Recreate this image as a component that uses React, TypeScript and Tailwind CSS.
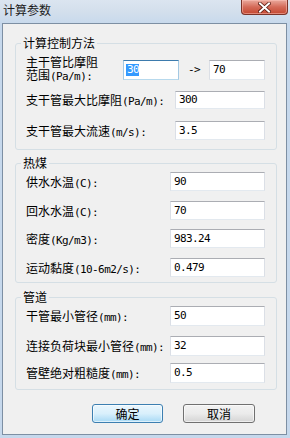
import React from "react";

const MONO = "font-['DejaVu_Sans_Mono',monospace] text-[11px] tracking-[-0.6px]";

function M({ t }: { t: string }) {
  const parts = t.split(/([\x00-\x7F]+)/).filter(Boolean);
  return (
    <>
      {parts.map((p, i) =>
        /^[\x00-\x7F]+$/.test(p) ? (
          <span key={i} className={MONO}>
            {p}
          </span>
        ) : (
          <span key={i}>{p}</span>
        )
      )}
    </>
  );
}

function Input({
  value,
  w,
  h,
  focused,
  selected,
}: {
  value: string;
  w: string;
  h: string;
  focused?: boolean;
  selected?: boolean;
}) {
  return (
    <div
      className={`${w} ${h} shrink-0 bg-white border flex items-center pl-[2px] overflow-hidden ${
        focused
          ? "border-t-[#3d7bad] border-l-[#a4c9e3] border-r-[#a4c9e3] border-b-[#b7d9ed]"
          : "border-t-[#abadb3] border-l-[#dbdfe6] border-r-[#dbdfe6] border-b-[#e3e9ef]"
      }`}
    >
      {selected ? (
        <span className={`${MONO} bg-[#3399ff] text-white leading-[12px] h-[12px] pl-[1px]`}>{value}</span>
      ) : (
        <span className={`${MONO} leading-[14px] h-[14px] pl-[1px]`}>{value}</span>
      )}
    </div>
  );
}

function Row({
  label,
  value,
  mt,
  h,
  w,
}: {
  label: string;
  value: string;
  mt: string;
  h: string;
  w: string;
}) {
  return (
    <div className={`flex items-center ${mt} ${h}`}>
      <div className="flex-1 h-[14px] leading-[14px] whitespace-nowrap">
        <M t={label} />
      </div>
      <Input value={value} w={w} h={h} />
    </div>
  );
}

function Group({
  title,
  mt,
  pb,
  children,
}: {
  title: string;
  mt: string;
  pb: string;
  children: React.ReactNode;
}) {
  return (
    <fieldset className={`${mt} ml-[12px] mr-[9px] border border-[#d5dfe5] rounded-[3px] ${pb}`}>
      <legend className="ml-[5px] px-[2px] h-[14px] leading-[14px]">
        <M t={title} />
      </legend>
      <div className="pl-[10px] pr-[11px]">{children}</div>
    </fieldset>
  );
}

export default function App() {
  return (
    <div className="w-[290px] h-[438px] flex flex-col bg-[#c6d8ec] overflow-hidden font-['Noto_Sans_CJK_SC',sans-serif] text-[12px] text-black">
      {/* title bar */}
      <div className="h-[23px] shrink-0 flex items-start bg-gradient-to-b from-[#dbe5f0] via-[#d3dfec] to-[#c8d9ec]">
        <span className="ml-[3px] mt-[3px] h-[14px] leading-[14px] text-[#1b1b1b]">计算参数</span>
        <div className="ml-auto mr-[2px] w-[47px] h-[15px] rounded-b-[4px] border border-t-0 border-[#7b3328] bg-gradient-to-b from-[#e9a99d] via-[#d46a58] to-[#c4472f] flex items-center justify-center shadow-[inset_0_0_0_1px_rgba(255,200,190,0.5)]">
          <svg width="13" height="11" viewBox="0 0 13 11">
            <path
              d="M2 1.5 L11 9.5 M11 1.5 L2 9.5"
              stroke="#5a1a10"
              strokeWidth="3.6"
              strokeLinecap="square"
            />
            <path
              d="M2 1.5 L11 9.5 M11 1.5 L2 9.5"
              stroke="#ffffff"
              strokeWidth="2"
              strokeLinecap="square"
            />
          </svg>
        </div>
      </div>

      {/* client area */}
      <div className="flex-1 ml-[2px] mr-[3px] mb-[3px] border border-[#7d8fa3] bg-[#f0f0f0] flex flex-col">
        <Group title="计算控制方法" mt="mt-[12px]" pb="pb-[9px]">
          <div className="flex items-center mt-[10px] h-[20px]">
            <div className="w-[97px] shrink-0 h-[26px] leading-[13px] mb-[4px] whitespace-nowrap">
              <div className="h-[13px]">主干管比摩阻</div>
              <div className="h-[13px]">
                <M t="范围(Pa/m):" />
              </div>
            </div>
            <Input value="30" w="w-[56px]" h="h-[20px]" focused selected />
            <div className={`w-[30px] text-center h-[14px] leading-[14px] ${MONO}`}>-&gt;</div>
            <Input value="70" w="w-[56px]" h="h-[20px]" />
          </div>
          <Row label="支干管最大比摩阻(Pa/m):" value="300" mt="mt-[11px]" h="h-[18px]" w="w-[90px]" />
          <Row label="支干管最大流速(m/s):" value="3.5" mt="mt-[12px]" h="h-[19px]" w="w-[90px]" />
        </Group>

        <Group title="热煤" mt="mt-[6px]" pb="pb-[5px]">
          <Row label="供水水温(C):" value="90" mt="mt-[2px]" h="h-[19px]" w="w-[95px]" />
          <Row label="回水水温(C):" value="70" mt="mt-[10px]" h="h-[19px]" w="w-[95px]" />
          <Row label="密度(Kg/m3):" value="983.24" mt="mt-[9px]" h="h-[19px]" w="w-[95px]" />
          <Row label="运动黏度(10-6m2/s):" value="0.479" mt="mt-[10px]" h="h-[19px]" w="w-[95px]" />
        </Group>

        <Group title="管道" mt="mt-[7px]" pb="pb-[6px]">
          <Row label="干管最小管径(mm):" value="50" mt="mt-[2px]" h="h-[20px]" w="w-[95px]" />
          <Row label="连接负荷块最小管径(mm):" value="32" mt="mt-[10px]" h="h-[20px]" w="w-[95px]" />
          <Row label="管壁绝对粗糙度(mm):" value="0.5" mt="mt-[7px]" h="h-[20px]" w="w-[95px]" />
        </Group>

        <div className="flex mt-[14px] ml-[89px] gap-[20px]">
          <button className="w-[71px] h-[19px] rounded-[3px] border border-[#3c7fb1] bg-gradient-to-b from-[#eaf6fd] via-[#d9f0fc] to-[#a7d9f5] shadow-[inset_0_0_0_1px_rgba(255,255,255,0.6)] flex items-center justify-center leading-[14px]">
            确定
          </button>
          <button className="w-[72px] h-[19px] rounded-[3px] border border-[#707070] bg-gradient-to-b from-[#f2f2f2] via-[#ebebeb] to-[#d4d4d4] shadow-[inset_0_0_0_1px_rgba(255,255,255,0.6)] flex items-center justify-center leading-[14px]">
            取消
          </button>
        </div>
      </div>
    </div>
  );
}
